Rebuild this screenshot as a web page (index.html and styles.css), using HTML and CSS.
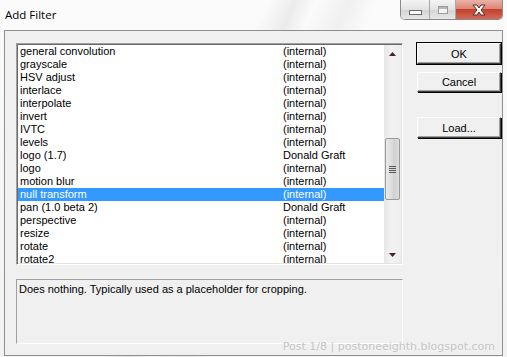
FILE: index.html
```html
<!DOCTYPE html>
<html lang="en">
<head>
    <meta charset="UTF-8">
    <title>Add Filter</title>
    <link rel="stylesheet" href="styles.css">
</head>
<body>
    <div class="window">
        <!-- Title bar -->
        <div class="titlebar">
            <span class="title">Add Filter</span>
            <div class="controls">
                <div class="ctl min"><span class="min-glyph"></span></div>
                <div class="ctl max"><span class="max-glyph"></span></div>
                <div class="ctl close">
                    <svg width="18" height="12" viewBox="0 0 18 12">
                        <path d="M3 1 L7 1 L9 4 L11 1 L15 1 L11 6 L15 11 L11 11 L9 8 L7 11 L3 11 L7 6 Z" fill="#fff" stroke="#5a2a22" stroke-width="1"/>
                    </svg>
                </div>
            </div>
        </div>

        <!-- Dialog -->
        <div class="dialog">
            <div class="main">
                <div class="listbox">
                    <div class="rows">
                        <div class="row"><span class="name">general convolution</span><span class="author">(internal)</span></div>
                        <div class="row"><span class="name">grayscale</span><span class="author">(internal)</span></div>
                        <div class="row"><span class="name">HSV adjust</span><span class="author">(internal)</span></div>
                        <div class="row"><span class="name">interlace</span><span class="author">(internal)</span></div>
                        <div class="row"><span class="name">interpolate</span><span class="author">(internal)</span></div>
                        <div class="row"><span class="name">invert</span><span class="author">(internal)</span></div>
                        <div class="row"><span class="name">IVTC</span><span class="author">(internal)</span></div>
                        <div class="row"><span class="name">levels</span><span class="author">(internal)</span></div>
                        <div class="row"><span class="name">logo (1.7)</span><span class="author">Donald Graft</span></div>
                        <div class="row"><span class="name">logo</span><span class="author">(internal)</span></div>
                        <div class="row"><span class="name">motion blur</span><span class="author">(internal)</span></div>
                        <div class="row selected"><span class="name">null transform</span><span class="author">(internal)</span></div>
                        <div class="row"><span class="name">pan (1.0 beta 2)</span><span class="author">Donald Graft</span></div>
                        <div class="row"><span class="name">perspective</span><span class="author">(internal)</span></div>
                        <div class="row"><span class="name">resize</span><span class="author">(internal)</span></div>
                        <div class="row"><span class="name">rotate</span><span class="author">(internal)</span></div>
                        <div class="row"><span class="name">rotate2</span><span class="author">(internal)</span></div>
                    </div>
                    <div class="scrollbar">
                        <div class="arrow">
                            <svg width="7" height="4" viewBox="0 0 7 4"><path d="M3.5 0 L7 4 L0 4 Z" fill="#4a1f2a"/></svg>
                        </div>
                        <div class="track">
                            <div class="thumb">
                                <div class="grip"></div>
                                <div class="grip"></div>
                                <div class="grip"></div>
                                <div class="grip"></div>
                            </div>
                        </div>
                        <div class="arrow">
                            <svg width="7" height="4" viewBox="0 0 7 4"><path d="M0 0 L7 0 L3.5 4 Z" fill="#4a1f2a"/></svg>
                        </div>
                    </div>
                </div>
                <div class="desc">Does nothing. Typically used as a placeholder for cropping.</div>
            </div>

            <div class="buttons">
                <button class="btn ok">OK</button>
                <button class="btn cancel">Cancel</button>
                <button class="btn load">Load...</button>
            </div>
        </div>

        <div class="watermark">Post 1/8 | postoneeighth.blogspot.com</div>
    </div>
</body>
</html>
```

FILE: styles.css
```css
/* General Styles */
* {
    margin: 0;
    padding: 0;
    box-sizing: border-box;
}

body {
    font-family: 'Liberation Sans', Arial, sans-serif;
    font-size: 11px;
    color: #000;
    background: #fff;
}

.window {
    position: relative;
    width: 507px;
    height: 357px;
    background:
        linear-gradient(115deg, transparent 40%, rgba(225, 225, 225, 0.6) 44%, transparent 47%, rgba(230, 230, 230, 0.5) 52%, transparent 56%),
        linear-gradient(#fbfbfb, #f2f2f2);
    overflow: hidden;
}

/* Title bar */
.titlebar {
    height: 30px;
    display: flex;
    justify-content: space-between;
    align-items: flex-start;
}

.title {
    font-family: 'Open Sans', 'Noto Sans', sans-serif;
    font-size: 11.5px;
    padding: 7px 0 0 5px;
    color: #000;
}

.controls {
    display: flex;
    height: 20px;
    margin-right: 4px;
    border: 1px solid #8a8a8a;
    border-top: none;
    border-radius: 0 0 5px 5px;
    overflow: hidden;
}

.ctl {
    display: flex;
    align-items: center;
    justify-content: center;
    background: linear-gradient(#f4f4f4, #e2e2e2 50%, #d4d4d4 51%, #e6e6e6);
}

.ctl.min {
    width: 29px;
    border-right: 1px solid #a8a8a8;
}

.ctl.max {
    width: 26px;
    border-right: 1px solid #a8a8a8;
}

.ctl.close {
    width: 46px;
    background: linear-gradient(#eab2a6, #dc8878 45%, #c5412c 50%, #d06a58);
}

.min-glyph {
    width: 13px;
    height: 5px;
    margin-top: 5px;
    border: 1px solid #6a6a6a;
    background: #fff;
}

.max-glyph {
    width: 10px;
    height: 8px;
    border: 1px solid #9a9a9a;
    box-shadow: inset 0 2px 0 #b8b8b8;
    background: #f4f4f4;
}

/* Dialog */
.dialog {
    height: 326px;
    margin: 0 4px;
    border: 1px solid #8e8f8f;
    background: #f0f0f0;
    display: flex;
    padding: 12px 0 0 11px;
}

.main {
    width: 387px;
}

.listbox {
    height: 222px;
    display: flex;
    background: #fff;
    border: 1px solid;
    border-color: #a0a0a0 #fff #fff #a0a0a0;
    box-shadow: inset 1px 1px 0 #696969, inset -1px -1px 0 #e3e3e3;
    padding: 1px 1px 1px 1px;
    overflow: hidden;
}

.rows {
    flex: 1;
    overflow: hidden;
}

.row {
    display: flex;
    height: 13px;
    line-height: 13px;
    padding-left: 2px;
    white-space: nowrap;
}

.row .name {
    width: 263px;
}

.row.selected {
    background: #3399ff;
    color: #fff;
}

/* Scrollbar */
.scrollbar {
    width: 17px;
    display: flex;
    flex-direction: column;
    background: linear-gradient(90deg, #e6e6e6, #f2f2f2 40%, #eeeeee);
}

.arrow {
    height: 17px;
    display: flex;
    align-items: center;
    justify-content: center;
}

.track {
    flex: 1;
    padding-top: 76px;
}

.thumb {
    height: 62px;
    margin: 0 0 0 1px;
    width: 15px;
    border: 1px solid #9a9a9a;
    border-radius: 2px;
    background: linear-gradient(90deg, #eaeaea, #dadada 50%, #cfcfcf 51%, #dcdcdc);
    display: flex;
    flex-direction: column;
    align-items: center;
    justify-content: center;
    gap: 1px;
}

.grip {
    width: 7px;
    height: 1px;
    background: #5a5a5a;
}

/* Description */
.desc {
    height: 65px;
    margin-top: 14px;
    padding: 3px 2px;
    border: 1px solid;
    border-color: #a0a0a0 #fff #fff #a0a0a0;
}

/* Buttons */
.buttons {
    display: flex;
    flex-direction: column;
    margin-left: 14px;
    width: 84px;
}

.btn {
    font-family: 'Liberation Sans', Arial, sans-serif;
    font-size: 11px;
    height: 21px;
    border: 1px solid #404040;
    border-color: #fff #404040 #404040 #fff;
    box-shadow: 1px 1px 0 #000, inset -1px -1px 0 #a0a0a0;
    background: #f0f0f0;
    color: #000;
}

.btn.ok {
    outline: 1px solid #000;
    outline-offset: 0;
    box-shadow: inset -1px -1px 0 #a0a0a0;
}

.btn.cancel {
    margin-top: 8px;
    height: 20px;
}

.btn.load {
    margin-top: 25px;
}

/* Watermark */
.watermark {
    position: absolute;
    right: 12px;
    bottom: 4px;
    font-family: 'DejaVu Sans', sans-serif;
    font-size: 11px;
    color: #c4c4c4;
    text-shadow: 0 0 2px #fff;
}
```
